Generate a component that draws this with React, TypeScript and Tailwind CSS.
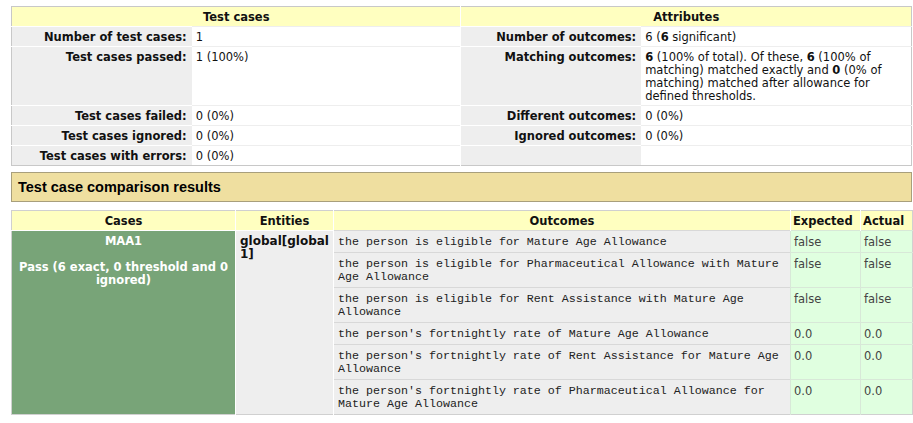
const summaryRows: { label: string; value: React.ReactNode; attrLabel: string; attrValue: React.ReactNode }[] = [
  {
    label: "Number of test cases:",
    value: "1",
    attrLabel: "Number of outcomes:",
    attrValue: (
      <>
        6 (<b>6</b> significant)
      </>
    ),
  },
  {
    label: "Test cases passed:",
    value: "1 (100%)",
    attrLabel: "Matching outcomes:",
    attrValue: (
      <>
        <b>6</b> (100% of total). Of these, <b>6</b> (100% of matching) matched exactly and <b>0</b> (0% of matching) matched after
        allowance for defined thresholds.
      </>
    ),
  },
  { label: "Test cases failed:", value: "0 (0%)", attrLabel: "Different outcomes:", attrValue: "0 (0%)" },
  { label: "Test cases ignored:", value: "0 (0%)", attrLabel: "Ignored outcomes:", attrValue: "0 (0%)" },
  { label: "Test cases with errors:", value: "0 (0%)", attrLabel: "", attrValue: "" },
];

const outcomes = [
  { text: "the person is eligible for Mature Age Allowance", expected: "false", actual: "false" },
  { text: "the person is eligible for Pharmaceutical Allowance with Mature Age Allowance", expected: "false", actual: "false" },
  { text: "the person is eligible for Rent Assistance with Mature Age Allowance", expected: "false", actual: "false" },
  { text: "the person's fortnightly rate of Mature Age Allowance", expected: "0.0", actual: "0.0" },
  { text: "the person's fortnightly rate of Rent Assistance for Mature Age Allowance", expected: "0.0", actual: "0.0" },
  { text: "the person's fortnightly rate of Pharmaceutical Allowance for Mature Age Allowance", expected: "0.0", actual: "0.0" },
];

const verdana = "font-['DejaVu_Sans',Verdana,sans-serif]";

export default function App() {
  return (
    <div className={`min-h-screen bg-white pt-[6px] pl-[11px] text-[11.5px] leading-[13px] text-[#111] ${verdana}`}>
      {/* summary */}
      <table className="w-[901px] table-fixed border-collapse border border-[#c8c8c8]">
        <colgroup>
          <col className="w-[180px]" />
          <col className="w-[269px]" />
          <col className="w-[180px]" />
          <col className="w-[270px]" />
        </colgroup>
        <thead>
          <tr className="bg-[#ffffc0]">
            <th colSpan={2} className="h-[20px] border-r border-white pt-[4px] pb-[2px] text-center font-bold">
              Test cases
            </th>
            <th colSpan={2} className="h-[20px] border-l border-[#dcdcb0] pt-[4px] pb-[2px] text-center font-bold">
              Attributes
            </th>
          </tr>
        </thead>
        <tbody>
          {summaryRows.map((r) => (
            <tr key={r.label} className="align-top">
              <td className="border-t border-white bg-[#eeeeee] pt-[4px] pb-[2px] pr-[5px] text-right font-bold">{r.label}</td>
              <td className="border-t border-[#eeeeee] pt-[4px] pb-[2px] pl-[4px]">{r.value}</td>
              <td className="border-t border-l border-white bg-[#eeeeee] pt-[4px] pb-[2px] pr-[5px] text-right font-bold">{r.attrLabel}</td>
              <td className="border-t border-[#eeeeee] pt-[4px] pb-[2px] pl-[4px] pr-[6px]">{r.attrValue}</td>
            </tr>
          ))}
        </tbody>
      </table>

      {/* section title */}
      <div className="mt-[6px] w-[901px] border border-[#a89f7c] bg-[#efdfa0] px-[6px] py-[6px] font-['Liberation_Sans',Arial,sans-serif] text-[14.5px] font-bold leading-[16px] text-black">
        Test case comparison results
      </div>

      {/* results */}
      <table className="mt-[8px] w-[901px] table-fixed border-collapse border border-[#d0d0d0]">
        <colgroup>
          <col className="w-[224px]" />
          <col className="w-[98px]" />
          <col className="w-[457px]" />
          <col className="w-[70px]" />
          <col className="w-[52px]" />
        </colgroup>
        <thead>
          <tr className="bg-[#ffffc0] font-bold">
            <th className="h-[20px] border-r border-white pt-[4px] pb-[2px] text-center">Cases</th>
            <th className="border-r border-white pt-[4px] pb-[2px] text-center">Entities</th>
            <th className="border-r border-white pt-[4px] pb-[2px] text-center">Outcomes</th>
            <th className="border-r border-white pt-[4px] pb-[2px] pl-[2px] text-left">Expected</th>
            <th className="pt-[4px] pb-[2px] pl-[2px] text-left">Actual</th>
          </tr>
        </thead>
        <tbody>
          {outcomes.map((o, i) => (
            <tr key={o.text} className="align-top">
              {i === 0 && (
                <>
                  <td rowSpan={outcomes.length} className="border-r border-t border-white bg-[#78a478] px-[4px] py-[4px] text-center font-bold text-white">
                    <div>MAA1</div>
                    <div className="mt-[13px]">Pass (6 exact, 0 threshold and 0 ignored)</div>
                  </td>
                  <td rowSpan={outcomes.length} className="border-r border-t border-white bg-[#eeeeee] px-[4px] py-[4px] text-[12px] font-bold leading-[13px] break-all">
                    global[global 1]
                  </td>
                </>
              )}
              <td className="border-t border-[#d8d8d8] bg-[#eeeeee] px-[4px] pt-[5px] pb-[3px] font-['Liberation_Mono','Courier_New',monospace] text-[11.67px] leading-[13px] text-[#222]">
                {o.text}
              </td>
              <td className="border-t border-l border-[#d8e8d8] bg-[#e0ffe0] px-[3px] pt-[5px] pb-[3px] text-[#444]">{o.expected}</td>
              <td className="border-t border-l border-[#d8e8d8] bg-[#e0ffe0] px-[3px] pt-[5px] pb-[3px] text-[#444]">{o.actual}</td>
            </tr>
          ))}
        </tbody>
      </table>
    </div>
  );
}
